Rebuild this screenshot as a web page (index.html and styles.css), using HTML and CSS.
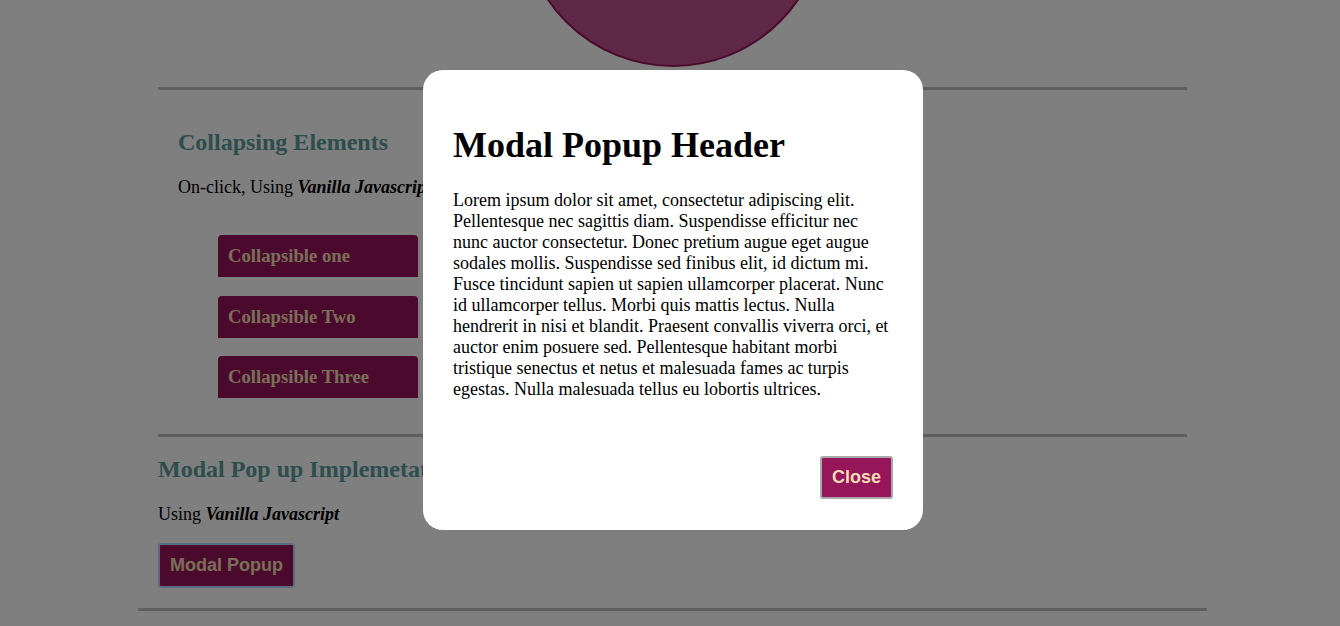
FILE: index.html
```html
<!DOCTYPE html>
<html lang="en">
<head>
<meta charset="utf-8">
<title>Collapsing Elements &amp; Modal</title>
<link rel="stylesheet" href="styles.css">
</head>
<body>
<main class="page">
  <header class="hero">
    <div class="avatar"></div>
  </header>
  <div class="inner">
    <hr class="rule">
    <section class="collapse-sec">
      <h2 class="sec-title">Collapsing Elements</h2>
      <p class="sec-text">On-click, Using <strong><em>Vanilla Javascript</em></strong></p>
      <div class="collapsibles">
        <button class="collapsible">Collapsible one</button>
        <button class="collapsible">Collapsible Two</button>
        <button class="collapsible">Collapsible Three</button>
      </div>
    </section>
    <hr class="rule">
    <section class="modal-sec">
      <h2 class="sec-title">Modal Pop up Implemetation</h2>
      <p class="sec-text">Using <strong><em>Vanilla Javascript</em></strong></p>
      <button class="btn btn-open">Modal Popup</button>
    </section>
  </div>
  <hr class="rule">
</main>

<div class="overlay">
  <div class="modal">
    <h1 class="modal-title">Modal Popup Header</h1>
    <p class="modal-text">Lorem ipsum dolor sit amet, consectetur adipiscing elit. Pellentesque nec sagittis diam. Suspendisse efficitur nec nunc auctor consectetur. Donec pretium augue eget augue sodales mollis. Suspendisse sed finibus elit, id dictum mi. Fusce tincidunt sapien ut sapien ullamcorper placerat. Nunc id ullamcorper tellus. Morbi quis mattis lectus. Nulla hendrerit in nisi et blandit. Praesent convallis viverra orci, et auctor enim posuere sed. Pellentesque habitant morbi tristique senectus et netus et malesuada fames ac turpis egestas. Nulla malesuada tellus eu lobortis ultrices.</p>
    <div class="modal-foot">
      <button class="btn btn-close">Close</button>
    </div>
  </div>
</div>
</body>
</html>
```

FILE: styles.css
```css
html, body {
  margin: 0;
  padding: 0;
}

body {
  padding-left: 5px;
  background: #ffffff;
  font-family: "Liberation Serif", "Times New Roman", serif;
  font-size: 18px;
  color: #000;
  overflow: hidden;
  height: 626px;
}

.page {
  width: 1069px;
  margin: 0 auto;
}

.hero {
  display: flex;
  justify-content: center;
}

.avatar {
  width: 300px;
  height: 300px;
  border-radius: 50%;
  background: #be508c;
  border: 2px solid #97155a;
  margin-top: -237px;
  margin-left: 1px;
}

.inner {
  margin: 20px 20px 0;
}

.rule {
  border: 0;
  height: 3px;
  background: #bfbfbf;
  margin: 0;
}

.sec-title {
  font-size: 24px;
  font-weight: bold;
  color: #5b9a9c;
  margin: 0;
  line-height: normal;
}

.sec-text {
  font-size: 18px;
  margin: 0;
  line-height: normal;
}

.collapse-sec {
  padding: 39px 0 36px 20px;
}

.collapse-sec .sec-text {
  margin-top: 21.3px;
}

.collapsibles {
  display: flex;
  flex-direction: column;
  align-items: flex-start;
  gap: 18.75px;
  margin-top: 36.5px;
  padding-left: 40px;
}

.collapsible {
  width: 200px;
  height: 42px;
  padding: 0 10px;
  text-align: left;
  border: 0;
  border-radius: 4px 4px 0 0;
  background: #97155a;
  color: #f5deb3;
  font-family: "Liberation Serif", "Times New Roman", serif;
  font-weight: bold;
  font-size: 18.7px;
}

.modal-sec {
  padding: 19.1px 0 20px;
}

.modal-sec .sec-text {
  margin-top: 21px;
}

.btn {
  font-family: "Liberation Sans", Arial, sans-serif;
  font-weight: bold;
  font-size: 18px;
  background: #97155a;
  color: #f5deb3;
  border-radius: 3px;
  line-height: 21px;
}

.btn-open {
  margin-top: 17.6px;
  padding: 10px 10px;
  border: 2px solid #b4d4ff;
  display: block;
}

.overlay {
  position: fixed;
  inset: 0;
  background: rgba(0, 0, 0, 0.5);
  display: flex;
  justify-content: center;
  align-items: flex-start;
  padding: 70px 0 0 6px;
}

.modal {
  width: 500px;
  box-sizing: border-box;
  background: #ffffff;
  border-radius: 20px;
  padding: 30px 30px 31px;
}

.modal-title {
  font-size: 36px;
  font-weight: bold;
  margin: 24.2px 0 0;
  line-height: normal;
}

.modal-text {
  font-size: 18px;
  line-height: normal;
  margin: 24px 0 0;
}

.modal-foot {
  display: flex;
  justify-content: flex-end;
  margin-top: 55.4px;
}

.btn-close {
  padding: 9px 10px;
  border: 2px solid #a8a8a8;
}
```
